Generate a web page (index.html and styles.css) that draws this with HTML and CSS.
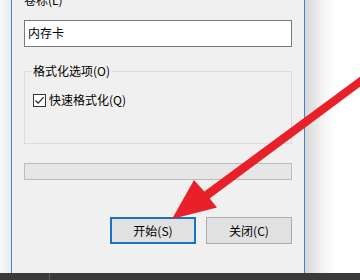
FILE: index.html
```html
<!DOCTYPE html>
<html>
  <head>
    <meta charset="utf-8">
    <title>格式化</title>
    <link rel="stylesheet" href="styles.css">
  </head>
  <body>
    <div class="screen">
      <div class="desk">
        <div class="side-left"></div>
        <div class="dialog">
          <div class="field-label">卷标(L)</div>
          <div class="textbox">内存卡</div>
          <fieldset class="group">
            <legend>格式化选项(O)</legend>
            <label class="check-row">
              <span class="checkbox">
                <svg width="11" height="11" viewBox="0 0 11 11"><path d="M1.5 5.5 L4.2 8.2 L9.6 2.2" fill="none" stroke="#222" stroke-width="1.2"/></svg>
              </span>
              快速格式化(Q)
            </label>
          </fieldset>
          <div class="progress"></div>
          <div class="buttons">
            <button class="btn btn-default">开始(S)</button>
            <button class="btn">关闭(C)</button>
          </div>
        </div>
        <div class="side-right"></div>
      </div>
      <div class="taskbar"><span class="divider"></span></div>
    </div>

    <!-- red annotation arrow -->
    <svg class="arrow" width="360" height="280" viewBox="0 0 360 280">
      <polygon points="362.6,74.8 204.3,191.4 194,180 172,219 217,207.5 209.7,198.6 367.4,81.2" fill="#e8202a"/>
    </svg>
  </body>
</html>
```

FILE: styles.css
```css
body {
  margin: 0;
  width: 360px;
  height: 280px;
  overflow: hidden;
  background: #fff;
  font-family: "Noto Sans CJK SC", "Microsoft YaHei", sans-serif;
  font-size: 12px;
  color: #000;
  position: relative;
}
.screen {
  display: flex;
  flex-direction: column;
  height: 280px;
}
.desk {
  display: flex;
  flex: 1;
  overflow: hidden;
}
.side-left {
  width: 11px;
  background: linear-gradient(to right, #f8f9fa, #e8ebee);
}
.dialog {
  width: 292px;
  background: #f0f0f0;
  border-left: 1px solid #4582c3;
  border-right: 1px solid #4582c3;
  padding: 0 12px;
  box-sizing: border-box;
  width: 294px;
}
.side-right {
  flex: 1;
  background: linear-gradient(to right, #d6d6d6, #f4f4f4 18px, #fff 30px);
}
.field-label {
  margin-top: -8px;
  height: 16px;
  line-height: 16px;
}
.textbox {
  margin-top: 12px;
  height: 27px;
  box-sizing: border-box;
  border: 1px solid #7a7a7a;
  background: #fff;
  padding-left: 3px;
  line-height: 24px;
}
.group {
  margin: 16px 0 0;
  border: 1px solid #dcdcdc;
  padding: 0 6px 35px;
}
.group legend {
  padding: 0 2px;
  line-height: 16px;
  height: 16px;
}
.check-row {
  display: flex;
  align-items: center;
  gap: 3px;
  margin: 13px 0 0 2px;
  height: 16px;
  line-height: 16px;
}
.checkbox {
  width: 13px;
  height: 13px;
  box-sizing: border-box;
  border: 1px solid #333;
  background: #fff;
  display: flex;
  align-items: center;
  justify-content: center;
}
.progress {
  margin-top: 19px;
  height: 17px;
  box-sizing: border-box;
  border: 1px solid #bcbcbc;
  background: #e6e6e6;
}
.buttons {
  display: flex;
  justify-content: flex-end;
  gap: 10px;
  margin-top: 37px;
}
.btn {
  width: 86px;
  height: 27px;
  box-sizing: border-box;
  border: 1px solid #adadad;
  background: #e1e1e1;
  font-family: inherit;
  font-size: 12px;
  color: #000;
  padding: 0;
}
.btn-default {
  border: 2px solid #1a73c0;
}
.taskbar {
  height: 7px;
  background: #3a3a3a;
  position: relative;
}
.taskbar .divider {
  position: absolute;
  left: 49px;
  top: 0;
  width: 1px;
  height: 7px;
  background: #5a5a5a;
}
.arrow {
  position: absolute;
  left: 0;
  top: 0;
  pointer-events: none;
}
```
